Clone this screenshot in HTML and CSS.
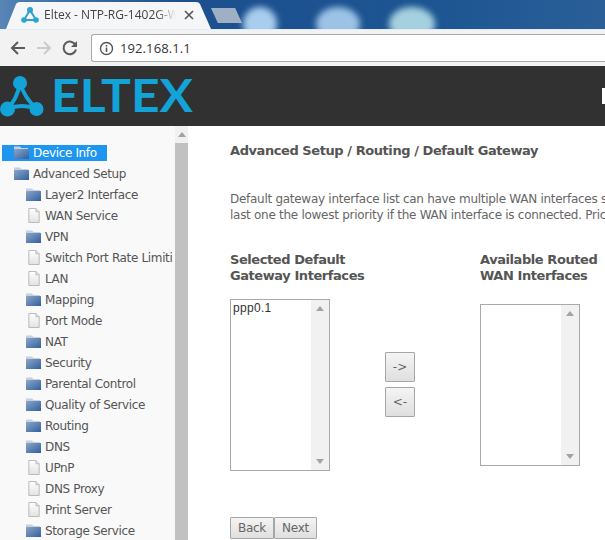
FILE: index.html
```html
<!DOCTYPE html>
<html lang="en">
<head>
<meta charset="utf-8">
<title>Eltex - NTP-RG-1402G-W</title>
<link rel="stylesheet" href="styles.css">
</head>
<body>
<svg class="defs" width="0" height="0">
  <defs>
    <linearGradient id="pagefill" x1="0" y1="0" x2="0" y2="1"><stop offset="0" stop-color="#ffffff"/><stop offset="1" stop-color="#e2e2e2"/></linearGradient>
    <linearGradient id="folderfill" x1="0" y1="0" x2="1" y2="1"><stop offset="0" stop-color="#8ba6c8"/><stop offset="1" stop-color="#315f9e"/></linearGradient>
    <symbol id="page" viewBox="0 0 14 16"><path d="M1.5 .5 H9 L12.5 4 V15.5 H1.5 Z" fill="url(#pagefill)" stroke="#b5b5b5"/><path d="M9 .5 V4 H12.5" fill="none" stroke="#b5b5b5"/></symbol>
    <symbol id="folder" viewBox="0 0 16 14"><path d="M0 1 H6 L7.5 2.5 H14 V4 H0 Z" fill="#c6d0de"/><path d="M0 3.5 H15 V13.5 H0 Z" fill="url(#folderfill)"/></symbol>
  </defs>
</svg>
<div class="tabstrip">
  <svg class="tabshape" width="215" height="29" viewBox="0 0 215 29"><path d="M3 29 L13 4 Q14 2 17 2 L193 2 Q196 2 197 4 L208 29 Z" fill="#f4f6f8"/></svg>
  <svg class="tabicon" width="18" height="18" viewBox="0 0 18 18"><path d="M9 4 L3 14 L15 14 Z" fill="none" stroke="#2ea3cf" stroke-width="2"/><circle cx="9" cy="4" r="3" fill="#2ea3cf"/><circle cx="3" cy="14" r="2.8" fill="#2ea3cf"/><circle cx="15" cy="14" r="2.8" fill="#2ea3cf"/></svg>
  <span class="tabtitle">Eltex - NTP-RG-1402G-W</span>
  <svg class="tabclose" width="10" height="10" viewBox="0 0 10 10"><path d="M1 1 L9 9 M9 1 L1 9" stroke="#555" stroke-width="1.6"/></svg>
  <div class="newtab"></div>
  <div class="blob blob1"></div>
  <div class="blob blob2"></div>
  <div class="blob blob3"></div>
</div>
<div class="toolbar">
  <svg class="navicon" width="18" height="18" viewBox="0 0 18 18"><path d="M16 9 H3 M9 3 L3 9 L9 15" fill="none" stroke="#5a5a5a" stroke-width="2"/></svg>
  <svg class="navicon" width="18" height="18" viewBox="0 0 18 18"><path d="M2 9 H15 M9 3 L15 9 L9 15" fill="none" stroke="#c9cbce" stroke-width="2"/></svg>
  <svg class="navicon" width="18" height="18" viewBox="0 0 18 18"><path d="M14.5 6 A6.3 6.3 0 1 0 15 10.5" fill="none" stroke="#5a5a5a" stroke-width="2"/><path d="M16 2 V8 H10 Z" fill="#5a5a5a"/></svg>
  <div class="omnibox">
    <svg width="15" height="15" viewBox="0 0 15 15"><circle cx="7.5" cy="7.5" r="6" fill="none" stroke="#555" stroke-width="1.4"/><path d="M7.5 6.5 V11 M7.5 4 V5.4" stroke="#555" stroke-width="1.6"/></svg>
    <span class="url">192.168.1.1</span>
  </div>
</div>
<header class="brand">
  <svg class="logo" width="196" height="60" viewBox="0 0 196 60">
    <path d="M20 17 Q17 34 7 43 Q22 37 37 43 Q25 33 20 17 Z" fill="none" stroke="#12a3d8" stroke-width="4"/>
    <circle cx="20" cy="17" r="7" fill="#12a3d8"/>
    <circle cx="7.5" cy="43" r="7.5" fill="#12a3d8"/>
    <circle cx="36.5" cy="43" r="7" fill="#12a3d8"/>
    <text x="51" y="46" class="logotext" textLength="142" lengthAdjust="spacingAndGlyphs">ELTEX</text>
  </svg>
  <div class="edgemark"></div>
</header>
<div class="main">
  <nav class="sidebar">
    <div class="tree">
      <div class="node top"><svg class="ico"><use href="#folder"/></svg><span class="sel">Device Info</span></div>
      <div class="node"><svg class="ico"><use href="#folder"/></svg>Advanced Setup</div>
      <div class="node sub"><svg class="ico"><use href="#folder"/></svg>Layer2 Interface</div>
      <div class="node sub"><svg class="ico"><use href="#page"/></svg>WAN Service</div>
      <div class="node sub"><svg class="ico"><use href="#folder"/></svg>VPN</div>
      <div class="node sub"><svg class="ico"><use href="#page"/></svg>Switch Port Rate Limiti</div>
      <div class="node sub"><svg class="ico"><use href="#page"/></svg>LAN</div>
      <div class="node sub"><svg class="ico"><use href="#folder"/></svg>Mapping</div>
      <div class="node sub"><svg class="ico"><use href="#page"/></svg>Port Mode</div>
      <div class="node sub"><svg class="ico"><use href="#folder"/></svg>NAT</div>
      <div class="node sub"><svg class="ico"><use href="#folder"/></svg>Security</div>
      <div class="node sub"><svg class="ico"><use href="#folder"/></svg>Parental Control</div>
      <div class="node sub"><svg class="ico"><use href="#folder"/></svg>Quality of Service</div>
      <div class="node sub"><svg class="ico"><use href="#folder"/></svg>Routing</div>
      <div class="node sub"><svg class="ico"><use href="#folder"/></svg>DNS</div>
      <div class="node sub"><svg class="ico"><use href="#page"/></svg>UPnP</div>
      <div class="node sub"><svg class="ico"><use href="#page"/></svg>DNS Proxy</div>
      <div class="node sub"><svg class="ico"><use href="#page"/></svg>Print Server</div>
      <div class="node sub"><svg class="ico"><use href="#folder"/></svg>Storage Service</div>
    </div>
    <div class="sidescroll"><span class="arrow up"></span><div class="thumb"></div></div>
  </nav>
  <main class="content">
    <h1 class="title">Advanced Setup / Routing / Default Gateway</h1>
    <p class="desc">Default gateway interface list can have multiple WAN interfaces s<br>last one the lowest priority if the WAN interface is connected. Pric</p>
    <div class="picker">
      <div class="col">
        <h2 class="collabel">Selected Default<br>Gateway Interfaces</h2>
        <div class="listbox tall"><div class="listtext">ppp0.1</div><div class="listscroll"><span class="arrow up"></span><span class="arrow down"></span></div></div>
      </div>
      <div class="movers">
        <button class="btn move">-&gt;</button>
        <button class="btn move">&lt;-</button>
      </div>
      <div class="col">
        <h2 class="collabel">Available Routed<br>WAN Interfaces</h2>
        <div class="listbox short"><div class="listtext"></div><div class="listscroll"><span class="arrow up"></span><span class="arrow down"></span></div></div>
      </div>
    </div>
    <div class="actions">
      <button class="btn nav">Back</button><button class="btn nav next">Next</button>
    </div>
  </main>
</div>
</body>
</html>
```
FILE: styles.css
```css
* { box-sizing: border-box; }
html, body { margin: 0; padding: 0; width: 605px; height: 540px; overflow: hidden; background: #fff; }
body { font-family: "DejaVu Sans", sans-serif; }
.defs { position: absolute; }

.tabstrip { position: relative; height: 29px; overflow: hidden; background: linear-gradient(90deg, #5b86b6 0, #4b7cb0 3%, #1d4f8e 30%, #1c5592 70%, #2a5f98 100%); }
.tabshape { position: absolute; left: 3px; top: 0; }
.tabicon { position: absolute; left: 21px; top: 6px; }
.tabtitle { position: absolute; left: 44px; top: 7px; width: 132px; overflow: hidden; white-space: nowrap; font: 12px "Open Sans", sans-serif; color: #444; line-height: 16px; -webkit-mask-image: linear-gradient(90deg, #000 85%, transparent 100%); mask-image: linear-gradient(90deg, #000 85%, transparent 100%); }
.tabclose { position: absolute; left: 184px; top: 10px; }
.newtab { position: absolute; left: 211px; top: 8px; width: 31px; height: 15px; background: #9fb0c4; clip-path: polygon(0 0, 78% 0, 100% 100%, 22% 100%); }
.blob { position: absolute; top: 7px; height: 34px; border-radius: 50%; background: #a8cdee; filter: blur(3px); }
.blob1 { left: 243px; width: 34px; }
.blob2 { left: 316px; width: 44px; background: #9cc3e6; }
.blob3 { left: 389px; width: 46px; background: #a5d0df; }

.toolbar { height: 37px; display: flex; align-items: center; background: #f2f2f2; border-top: 1px solid #e4ecf3; padding: 0 0 0 9px; gap: 8px; }
.omnibox { flex: 1; margin-left: 4px; height: 28px; background: #fff; border: 1px solid #aaa; border-right: 0; border-radius: 3px 0 0 3px; display: flex; align-items: center; padding-left: 7px; gap: 6px; }
.url { font: 13px "Open Sans", sans-serif; color: #333; letter-spacing: 0.1px; }

.brand { position: relative; height: 60px; background: #313131; }
.logo { display: block; }
.logotext { font-family: "Lato", sans-serif; font-size: 46px; font-weight: 700; fill: #12a3d8; }
.edgemark { position: absolute; right: 0; top: 22px; width: 3px; height: 16px; background: #fff; }

.main { display: flex; height: 414px; }
.sidebar { width: 188px; display: flex; background: #f9f9f9; flex: none; }
.tree { width: 175px; overflow: hidden; padding: 16px 0 0 2px; }
.node { height: 21px; display: flex; align-items: center; padding-left: 12px; white-space: nowrap; font-size: 12px; letter-spacing: -0.35px; color: #555; }
.node.sub { padding-left: 24px; }
.ico { flex: none; width: 16px; height: 15px; margin-right: 3px; }
.node.top { position: relative; padding-left: 0; }
.node.top .ico { position: absolute; left: 12px; }
.sel { background: #1e96f0; color: #fff; height: 16px; line-height: 16px; padding: 0 0 0 31px; width: 105px; }

.sidescroll { width: 13px; position: relative; background: #f1f1f1; padding-top: 17px; }
.thumb { height: 397px; background: #c1c1c1; }
.arrow { display: block; position: absolute; left: 50%; margin-left: -4px; width: 0; height: 0; border-left: 4px solid transparent; border-right: 4px solid transparent; }
.arrow.up { top: 6px; border-bottom: 5px solid #a3a3a3; }
.arrow.down { bottom: 6px; border-top: 5px solid #a3a3a3; }

.content { flex: 1; min-width: 0; overflow: hidden; padding: 16px 0 0 42px; color: #555; }
.title { margin: 0; font-size: 13px; line-height: 17px; font-weight: 700; white-space: nowrap; letter-spacing: -0.43px; color: #555; }
.desc { margin: 32px 0 0; font-size: 12px; line-height: 16px; white-space: nowrap; letter-spacing: -0.28px; color: #666; }
.picker { display: flex; margin-top: 29px; }
.col { flex: none; }
.collabel { margin: 0; font-size: 13px; line-height: 16px; font-weight: 700; letter-spacing: -0.43px; color: #555; white-space: nowrap; }
.col:first-child { width: 155px; }
.listbox { display: flex; background: #fff; border: 1px solid #a9a9a9; margin-top: 15px; }
.tall { width: 100px; height: 172px; }
.short { width: 100px; height: 162px; margin-top: 20px; }
.listtext { flex: 1; font: 12px/14px "Liberation Sans", sans-serif; color: #333; padding: 1px 2px; letter-spacing: 0.3px; }
.listscroll { position: relative; width: 18px; background: #f1f1f1; }
.movers { flex: none; width: 95px; display: flex; flex-direction: column; gap: 5px; padding-top: 100px; }
.btn { display: block; padding: 0; font-family: "DejaVu Sans", sans-serif; font-size: 12px; color: #666; background: linear-gradient(180deg, #f4f4f4, #dfdfdf); border: 1px solid #a6a6a6; border-radius: 1px; }
.move { width: 30px; height: 30px; }
.actions { display: flex; margin-top: 46px; }
.nav { height: 22px; width: 44px; letter-spacing: -0.3px; }
.next { width: 43px; }
```
